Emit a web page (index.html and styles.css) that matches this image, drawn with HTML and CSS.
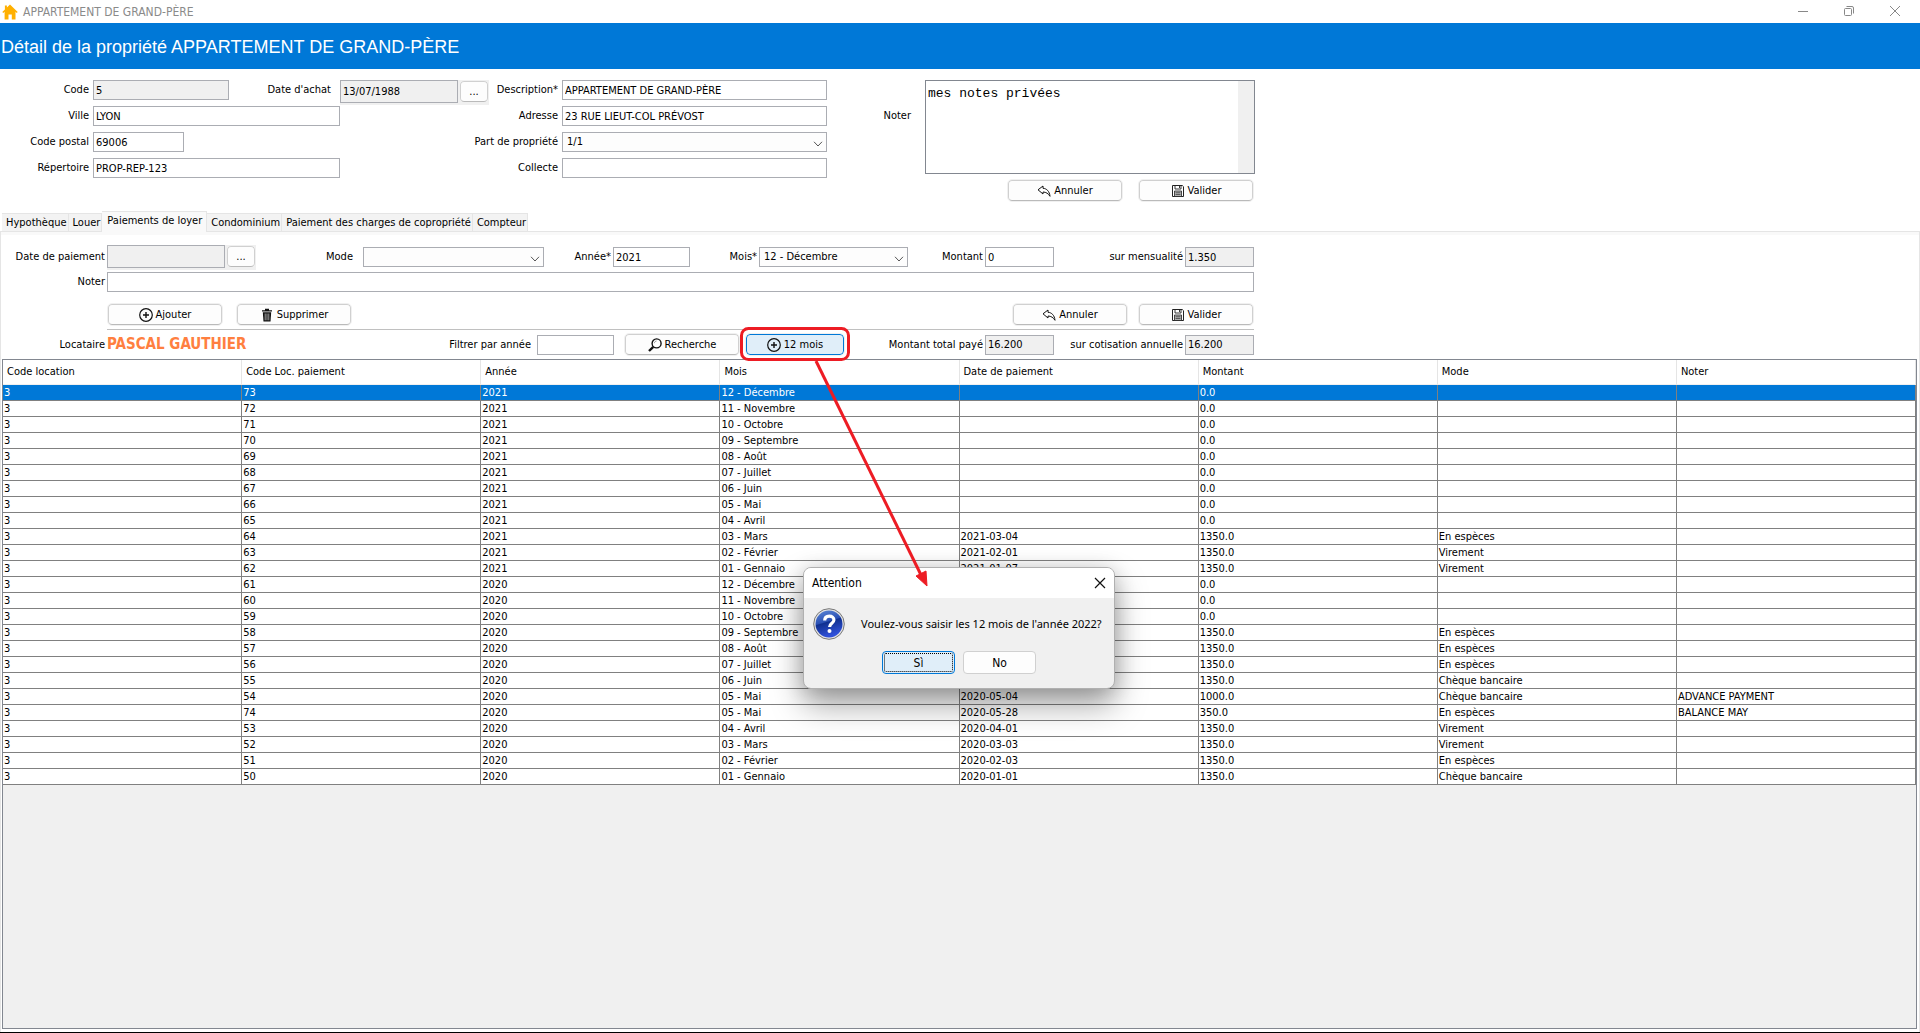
FILE: index.html
```html
<!DOCTYPE html>
<html lang="fr">
<head>
<meta charset="utf-8">
<title>APPARTEMENT DE GRAND-PÈRE</title>
<link rel="stylesheet" href="styles.css">
</head>
<body>
<svg class="sprite" aria-hidden="true">
  <symbol id="i-plus" viewBox="0 0 14 14"><circle cx="7" cy="7" r="6.3" fill="none" stroke="#111" stroke-width="1.2"/><path d="M7 4v6M4 7h6" stroke="#111" stroke-width="1.4"/></symbol>
  <symbol id="i-trash" viewBox="0 0 14 14"><path d="M2 2.2h3V.8h4v1.400h3v1.300H2z" fill="#111"/><path d="M2.800 4.300h8.400l-.7 9.200h-7z" fill="#111"/><path d="M5.200 5.500v6.800M7 5.500v6.800M8.800 5.500v6.800" stroke="#ddd" stroke-width=".7"/></symbol>
  <symbol id="i-undo" viewBox="0 0 14 14"><path d="M1 5.800 6 2v2.300c3.700.2 6.500 3 7 8-1.700-2.700-3.800-4.200-7-4.300v2z" fill="#fff" stroke="#111" stroke-width="1" stroke-linejoin="round"/></symbol>
  <symbol id="i-save" viewBox="0 0 14 14"><path d="M1.500 1.500h9.800l1.200 1.200v9.800h-11z" fill="#fff" stroke="#222"/><path d="M4 1.500v3.500h6V1.500M8.500 2v2" fill="none" stroke="#222" stroke-width=".9"/><path d="M3.500 7h7v5.500h-7z" fill="#bbb" stroke="#222" stroke-width=".8"/><path d="M4.500 8.800h5M4.500 10.600h5" stroke="#222" stroke-width=".7"/></symbol>
  <symbol id="i-search" viewBox="0 0 14 14"><circle cx="8.600" cy="5.400" r="4.500" fill="#fff" stroke="#111" stroke-width="1.400"/><path d="M6.300 5.200c.2-1.200 1-2 2.200-2.200" fill="none" stroke="#777" stroke-width=".8"/><path d="M5.300 8.800 1 13" stroke="#111" stroke-width="2.400"/></symbol>
  <symbol id="i-chevron" viewBox="0 0 10 6"><path d="M1 .8 5 5 9 .8" fill="none" stroke="#555" stroke-width="1"/></symbol>
</svg>

<div class="window">
  <header class="titlebar">
    <svg class="house" viewBox="0 0 16 16" aria-hidden="true"><path d="M8 .5 15.700 8l-1 .9-1.200-1.100V15.500H9.800V10.500H6.500v5H2.600V7.800L1.300 8.900.3 8l2.600-2.600V1.500h2v2z" fill="#ffb000"/></svg>
    <span class="caption">APPARTEMENT DE GRAND-PÈRE</span>
    <div class="win-controls">
      <button type="button" aria-label="Réduire"><svg viewBox="0 0 10 10"><path d="M0 5.500h10" stroke="#888"/></svg></button>
      <button type="button" aria-label="Restaurer"><svg viewBox="0 0 10 10"><rect x=".5" y="2.500" width="7" height="7" rx="1" fill="none" stroke="#888"/><path d="M2.500.5H8q1.500 0 1.500 1.500v5.500" fill="none" stroke="#888"/></svg></button>
      <button type="button" aria-label="Fermer"><svg viewBox="0 0 10 10"><path d="M0 0l10 10M10 0 0 10" stroke="#888"/></svg></button>
    </div>
  </header>

  <h1 class="banner">Détail de la propriété APPARTEMENT DE GRAND-PÈRE</h1>

  <form class="property">
    <label for="code">Code</label>
    <div class="split"><input id="code" class="field w-code" value="5" readonly><label class="loose" for="achat">Date d'achat</label></div>
    <div class="datepick"><input id="achat" class="field" value="13/07/1988" readonly><button type="button" class="btn dots">...</button></div>
    <label for="desc">Description*</label>
    <input id="desc" class="field" value="APPARTEMENT DE GRAND-PÈRE">

    <label for="ville" class="c1">Ville</label>
    <input id="ville" class="field" value="LYON">
    <label for="adr" class="c4">Adresse</label>
    <input id="adr" class="field" value="23 RUE LIEUT-COL PRÉVOST">
    <label for="notes" class="loose">Noter</label>

    <label for="cp" class="c1">Code postal</label>
    <input id="cp" class="field w-cp" value="69006">
    <label for="part" class="c4">Part de propriété</label>
    <div class="combo"><select id="part" class="field"><option>1/1</option></select><svg><use href="#i-chevron"/></svg></div>

    <label for="rep" class="c1">Répertoire</label>
    <input id="rep" class="field" value="PROP-REP-123">
    <label for="col" class="c4">Collecte</label>
    <input id="col" class="field">

    <div class="notes">
      <textarea id="notes">mes notes privées</textarea>
      <div class="notes-actions">
        <button type="button" class="btn"><svg><use href="#i-undo"/></svg>Annuler</button>
        <button type="button" class="btn"><svg><use href="#i-save"/></svg>Valider</button>
      </div>
    </div>
  </form>

  <div class="tabs" role="tablist">
    <button type="button" role="tab">Hypothèque</button>
    <button type="button" role="tab">Louer</button>
    <button type="button" role="tab" class="active" aria-selected="true">Paiements de loyer</button>
    <button type="button" role="tab">Condominium</button>
    <button type="button" role="tab">Paiement des charges de copropriété</button>
    <button type="button" role="tab">Compteur</button>
  </div>

  <section class="panel">
    <form class="payment">
      <label for="dpay">Date de paiement</label>
      <div class="datepick"><input id="dpay" class="field" readonly><button type="button" class="btn dots">...</button></div>
      <label for="mode" class="loose">Mode</label>
      <div class="combo"><select id="mode" class="field"><option></option></select><svg><use href="#i-chevron"/></svg></div>
      <label for="annee">Année*</label>
      <input id="annee" class="field" value="2021">
      <label for="mois">Mois*</label>
      <div class="combo"><select id="mois" class="field"><option>12 - Décembre</option></select><svg><use href="#i-chevron"/></svg></div>
      <label for="montant">Montant</label>
      <input id="montant" class="field" value="0">
      <label for="mens">sur mensualité</label>
      <input id="mens" class="field" value="1.350" readonly>
      <label for="pnote" class="c1">Noter</label>
      <input id="pnote" class="field wide">
    </form>

    <div class="toolbar">
      <div class="edit-actions">
        <button type="button" class="btn"><svg><use href="#i-plus"/></svg>Ajouter</button>
        <button type="button" class="btn"><svg><use href="#i-trash"/></svg>Supprimer</button>
      </div>
      <div class="save-actions">
        <button type="button" class="btn"><svg><use href="#i-undo"/></svg>Annuler</button>
        <button type="button" class="btn"><svg><use href="#i-save"/></svg>Valider</button>
      </div>
    </div>

    <form class="summary">
      <span class="tenant-label">Locataire</span>
      <strong class="tenant">PASCAL GAUTHIER</strong>
      <label for="filtre" class="loose">Filtrer par année</label>
      <input id="filtre" class="field w-filter">
      <button type="button" class="btn search"><svg><use href="#i-search"/></svg>Recherche</button>
      <div class="callout">
        <button type="button" class="btn primary"><svg><use href="#i-plus"/></svg>12 mois</button>
        <svg class="mark" viewBox="0 0 200 264" aria-hidden="true">
          <rect x="1.500" y="1.500" width="107" height="31" rx="7" fill="none" stroke="#ed1c24" stroke-width="3"/>
          <path d="M76 34 182 250" stroke="#ed1c24" stroke-width="3"/>
          <path d="M176 249l10-5 1 15z" fill="#ed1c24" stroke="#ed1c24"/>
        </svg>
      </div>
      <label for="total" class="total">Montant total payé</label>
      <input id="total" class="field w-sum" value="16.200" readonly>
      <label for="cotis" class="annual">sur cotisation annuelle</label>
      <input id="cotis" class="field w-sum" value="16.200" readonly>
    </form>

    <div class="grid">
      <table>
        <thead><tr><th>Code location</th><th>Code Loc. paiement</th><th>Année</th><th>Mois</th><th>Date de paiement</th><th>Montant</th><th>Mode</th><th>Noter</th></tr></thead>
        <tbody>
          <tr class="selected"><td>3</td><td>73</td><td>2021</td><td>12 - Décembre</td><td></td><td>0.0</td><td></td><td></td></tr>
          <tr><td>3</td><td>72</td><td>2021</td><td>11 - Novembre</td><td></td><td>0.0</td><td></td><td></td></tr>
          <tr><td>3</td><td>71</td><td>2021</td><td>10 - Octobre</td><td></td><td>0.0</td><td></td><td></td></tr>
          <tr><td>3</td><td>70</td><td>2021</td><td>09 - Septembre</td><td></td><td>0.0</td><td></td><td></td></tr>
          <tr><td>3</td><td>69</td><td>2021</td><td>08 - Août</td><td></td><td>0.0</td><td></td><td></td></tr>
          <tr><td>3</td><td>68</td><td>2021</td><td>07 - Juillet</td><td></td><td>0.0</td><td></td><td></td></tr>
          <tr><td>3</td><td>67</td><td>2021</td><td>06 - Juin</td><td></td><td>0.0</td><td></td><td></td></tr>
          <tr><td>3</td><td>66</td><td>2021</td><td>05 - Mai</td><td></td><td>0.0</td><td></td><td></td></tr>
          <tr><td>3</td><td>65</td><td>2021</td><td>04 - Avril</td><td></td><td>0.0</td><td></td><td></td></tr>
          <tr><td>3</td><td>64</td><td>2021</td><td>03 - Mars</td><td>2021-03-04</td><td>1350.0</td><td>En espèces</td><td></td></tr>
          <tr><td>3</td><td>63</td><td>2021</td><td>02 - Février</td><td>2021-02-01</td><td>1350.0</td><td>Virement</td><td></td></tr>
          <tr><td>3</td><td>62</td><td>2021</td><td>01 - Gennaio</td><td>2021-01-07</td><td>1350.0</td><td>Virement</td><td></td></tr>
          <tr><td>3</td><td>61</td><td>2020</td><td>12 - Décembre</td><td></td><td>0.0</td><td></td><td></td></tr>
          <tr><td>3</td><td>60</td><td>2020</td><td>11 - Novembre</td><td></td><td>0.0</td><td></td><td></td></tr>
          <tr><td>3</td><td>59</td><td>2020</td><td>10 - Octobre</td><td></td><td>0.0</td><td></td><td></td></tr>
          <tr><td>3</td><td>58</td><td>2020</td><td>09 - Septembre</td><td></td><td>1350.0</td><td>En espèces</td><td></td></tr>
          <tr><td>3</td><td>57</td><td>2020</td><td>08 - Août</td><td></td><td>1350.0</td><td>En espèces</td><td></td></tr>
          <tr><td>3</td><td>56</td><td>2020</td><td>07 - Juillet</td><td></td><td>1350.0</td><td>En espèces</td><td></td></tr>
          <tr><td>3</td><td>55</td><td>2020</td><td>06 - Juin</td><td></td><td>1350.0</td><td>Chèque bancaire</td><td></td></tr>
          <tr><td>3</td><td>54</td><td>2020</td><td>05 - Mai</td><td>2020-05-04</td><td>1000.0</td><td>Chèque bancaire</td><td>ADVANCE PAYMENT</td></tr>
          <tr><td>3</td><td>74</td><td>2020</td><td>05 - Mai</td><td>2020-05-28</td><td>350.0</td><td>En espèces</td><td>BALANCE MAY</td></tr>
          <tr><td>3</td><td>53</td><td>2020</td><td>04 - Avril</td><td>2020-04-01</td><td>1350.0</td><td>Virement</td><td></td></tr>
          <tr><td>3</td><td>52</td><td>2020</td><td>03 - Mars</td><td>2020-03-03</td><td>1350.0</td><td>Virement</td><td></td></tr>
          <tr><td>3</td><td>51</td><td>2020</td><td>02 - Février</td><td>2020-02-03</td><td>1350.0</td><td>En espèces</td><td></td></tr>
          <tr><td>3</td><td>50</td><td>2020</td><td>01 - Gennaio</td><td>2020-01-01</td><td>1350.0</td><td>Chèque bancaire</td><td></td></tr>
        </tbody>
      </table>
    </div>
  </section>
</div>

<div class="dialog" role="dialog" aria-labelledby="dlg-title">
  <div class="dialog-head">
    <span id="dlg-title">Attention</span>
    <button type="button" class="close" aria-label="Fermer"><svg viewBox="0 0 12 12"><path d="M1 1l10 10M11 1 1 11" stroke="#111" stroke-width="1.200"/></svg></button>
  </div>
  <div class="dialog-message">
    <svg class="question" viewBox="0 0 32 32" aria-hidden="true">
      <defs><linearGradient id="ball" x1="0" y1="0" x2="0.300" y2="1"><stop offset="0" stop-color="#5f8ad8"/><stop offset=".48" stop-color="#2a50b4"/><stop offset=".52" stop-color="#10308f"/><stop offset="1" stop-color="#2f50d8"/></linearGradient></defs>
      <circle cx="16" cy="16" r="15.300" fill="#e4e4e4" stroke="#777" stroke-width="1"/>
      <circle cx="16" cy="16" r="13.500" fill="url(#ball)"/>
      <path d="M11.700 12.600c0-3 2-4.400 4.600-4.400 2.700 0 4.600 1.500 4.600 3.800 0 3.400-4.300 3.300-4.300 7" fill="none" stroke="#fff" stroke-width="3.200"/>
      <circle cx="16.500" cy="23" r="2" fill="#fff"/>
    </svg>
    <p>Voulez-vous saisir les 12 mois de l'année 2022?</p>
  </div>
  <div class="dialog-actions">
    <button type="button" class="default">Sì</button>
    <button type="button">No</button>
  </div>
</div>
</body>
</html>
```
FILE: styles.css
```css
* { box-sizing: border-box; }

body {
  margin: 0;
  background: #fff;
  color: #000;
  font: 11px/14px "DejaVu Sans Condensed", "DejaVu Sans", sans-serif;
}

button, input, select { font: inherit; color: inherit; }

.sprite { position: absolute; width: 0; height: 0; }

.window {
  display: flex;
  flex-direction: column;
  min-height: 100vh;
  border-bottom: 1px solid #000;
}

/* Window title bar */
.titlebar {
  display: flex;
  align-items: center;
  height: 23px;
  padding: 0 2px;
  color: #8a8a8a;
  font-size: 12px;
}
.house { width: 16px; height: 16px; margin-right: 5px; }
.win-controls { display: flex; margin-left: auto; }
.win-controls button {
  display: flex;
  align-items: center;
  justify-content: center;
  width: 46px;
  height: 22px;
  padding: 0 0 2px 0;
  border: 0;
  background: none;
}
.win-controls svg { width: 10px; height: 10px; }

.banner {
  margin: 0;
  height: 46px;
  padding-left: 1px;
  background: #0078d7;
  color: #fff;
  font: 18px/48px "Liberation Sans", Arial, sans-serif;
}

/* Form controls */
label, .tenant-label { padding-right: 4px; text-align: right; white-space: nowrap; }
.loose { padding-right: 12px; }

.field {
  width: 100%;
  height: 20px;
  margin: 0;
  padding: 0 2px;
  border: 1px solid #abadb3;
  border-radius: 0;
  background: #fff;
}
.field:read-only:not(select) { background: #f0f0f0; }

.combo { position: relative; }
.combo select { appearance: none; display: block; padding-left: 4px; background: #fdfdfd; }
.combo svg {
  position: absolute;
  right: 4px;
  top: 9px;
  width: 10px;
  height: 6px;
  pointer-events: none;
}

.datepick {
  display: flex;
  align-self: start;
  gap: 2px;
  height: 25px;
  background: #f0f0f0;
}
.datepick .field { flex: 1; width: auto; min-width: 0; height: 23px; }

.btn {
  display: inline-flex;
  align-items: center;
  justify-content: center;
  gap: 3px;
  width: 114px;
  height: 21px;
  padding: 0;
  border: 1px solid #d0d0d0;
  border-bottom-color: #bababa;
  border-radius: 4px;
  background: #fdfdfd;
  outline: 1px solid #f0f0f0;
}
.btn svg { width: 14px; height: 14px; }
.btn.dots { width: 28px; margin: 1px 1px 0 0; }
.btn.primary { width: 98px; border-color: #0078d7; background: #e0eef9; }

/* Property sheet */
.property {
  display: grid;
  grid-template-columns: 93px 247px 149px 73px 265px 98px 330px;
  grid-template-rows: repeat(4, 20px) 27px;
  row-gap: 6px;
  align-items: center;
  padding-top: 11px;
}
.property > label { justify-self: end; }
.c1 { grid-column: 1; }
.c4 { grid-column: 4; }
.split { display: flex; align-items: center; justify-content: space-between; }
.split .loose { padding-right: 9px; }
.property > .loose { padding-right: 14px; }
.w-code { width: 136px; }
.w-cp { width: 91px; }
.notes {
  display: flex;
  flex-direction: column;
  gap: 6px;
  grid-column: 7;
  grid-row: 1 / 6;
  align-self: start;
}
.notes textarea {
  height: 94px;
  margin: 0;
  padding: 5px 2px;
  border: 1px solid #828790;
  resize: none;
  background: linear-gradient(#f0f0f0, #f0f0f0) right / 16px 100% no-repeat #fff;
  color: #000;
  font: 13px/15px "Liberation Mono", "Courier New", monospace;
}
.notes-actions { display: flex; justify-content: flex-end; gap: 17px; padding-right: 2px; }

/* Tabs */
.tabs {
  display: flex;
  align-items: flex-end;
  height: 20px;
  padding-left: 2px;
}
.tabs button {
  height: 18px;
  padding: 0 1px 0 4px;
  border: 1px solid #e5e5e5;
  border-width: 1px 1px 0 0;
  background: #f3f3f3;
  white-space: nowrap;
}
.tabs button.active {
  z-index: 1;
  height: 21px;
  margin-bottom: -1px;
  padding: 0 4px 2px 5px;
  background: #f9f9f9;
}

.panel {
  display: flex;
  flex-direction: column;
  flex: 1;
  padding: 13px 2px 3px 1px;
  border: 1px solid #e5e5e5;
  border-width: 1px 1px 0 1px;
  background: linear-gradient(#f9f9f9, #f9f9f9) top / 100% 3px no-repeat;
}

/* Payment entry; the 105px label column plus the panel inset aligns every row */
.payment {
  display: grid;
  grid-template-columns: 105px 149px 107px 181px 69px 77px 69px 149px 77px 69px 131px 69px;
  grid-template-rows: 24px 20px;
  row-gap: 3px;
  align-items: center;
}
.payment label { padding-right: 2px; }
.payment label.loose { padding-right: 10px; }
.wide { grid-column: 2 / -1; }

.toolbar {
  display: flex;
  justify-content: space-between;
  width: 1147px;
  margin-left: 105px;
  padding: 12px 1px 4px 1px;
  border-bottom: 1px solid #c0c0c0;
}
.edit-actions { display: flex; gap: 15px; }
.save-actions { display: flex; gap: 12px; }

.summary {
  display: flex;
  align-items: center;
  padding: 4px 0;
}
.tenant-label { width: 105px; padding-right: 2px; }
.tenant {
  flex: none;
  width: 318px;
  color: #ff7f40;
  font-size: 15px;
  line-height: 21px;
}
.summary label.loose { width: 112px; padding-right: 6px; }
.w-filter { width: 77px; }
.w-sum { width: 69px; }
.search { margin-left: 11px; }
.total { width: 141px; padding-right: 2px; }
.annual { width: 131px; padding-right: 2px; }

/* Red marker around the "12 mois" button with its arrow to the dialog */
.callout { position: relative; display: flex; margin-left: 7px; }
.callout .mark {
  position: absolute;
  z-index: 3;
  left: -6px;
  top: -7px;
  width: 200px;
  height: 264px;
  pointer-events: none;
}

/* Payments list */
.grid {
  flex: 1;
  border: 1px solid #828790;
  background: #f0f0f0;
}
table {
  width: 100%;
  border-spacing: 0;
  table-layout: fixed;
}
th {
  height: 25px;
  padding: 0 4px;
  border-right: 1px solid #e5e5e5;
  border-bottom: 1px solid #f0f0f0;
  background: #fff;
  font-weight: normal;
  text-align: left;
}
td {
  height: 16px;
  padding: 0 1px;
  border: 1px solid #808080;
  border-width: 0 1px 1px 0;
  background: #fff;
  line-height: 14px;
  white-space: nowrap;
}
.selected td { background: #0078d7; color: #fff; }

/* Confirmation dialog */
.dialog {
  position: absolute;
  z-index: 2;
  top: 567px;
  left: 50%;
  width: 312px;
  height: 122px;
  margin-left: -157px;
  border: 1px solid #b0b0b0;
  border-radius: 8px;
  background: #f0f0f0;
  box-shadow: 0 16px 32px rgba(0, 0, 0, .36), 0 2px 20px rgba(0, 0, 0, .16);
}
.dialog-head {
  display: flex;
  align-items: center;
  justify-content: space-between;
  height: 30px;
  padding: 0 8px;
  border-radius: 7px 7px 0 0;
  background: #fff;
  font-size: 12px;
}
.close { display: flex; padding: 0; border: 0; background: none; }
.close svg { width: 12px; height: 12px; }
.dialog-message {
  display: flex;
  align-items: center;
  gap: 16px;
  padding: 10px 9px 0 9px;
  font: 11px/14px "Noto Sans", sans-serif;
}
.dialog-message p { margin: 0; white-space: nowrap; }
.question { width: 32px; height: 32px; }
.dialog-actions {
  display: flex;
  justify-content: center;
  gap: 8px;
  padding-top: 11px;
}
.dialog-actions button {
  width: 73px;
  height: 23px;
  padding: 0;
  border: 1px solid #d0d0d0;
  border-radius: 4px;
  background: #fdfdfd;
  font-size: 12px;
}
.dialog-actions .default {
  border-color: #0078d7;
  background: #e0eef9;
  outline: 1px dotted #000;
  outline-offset: -3px;
}
```
